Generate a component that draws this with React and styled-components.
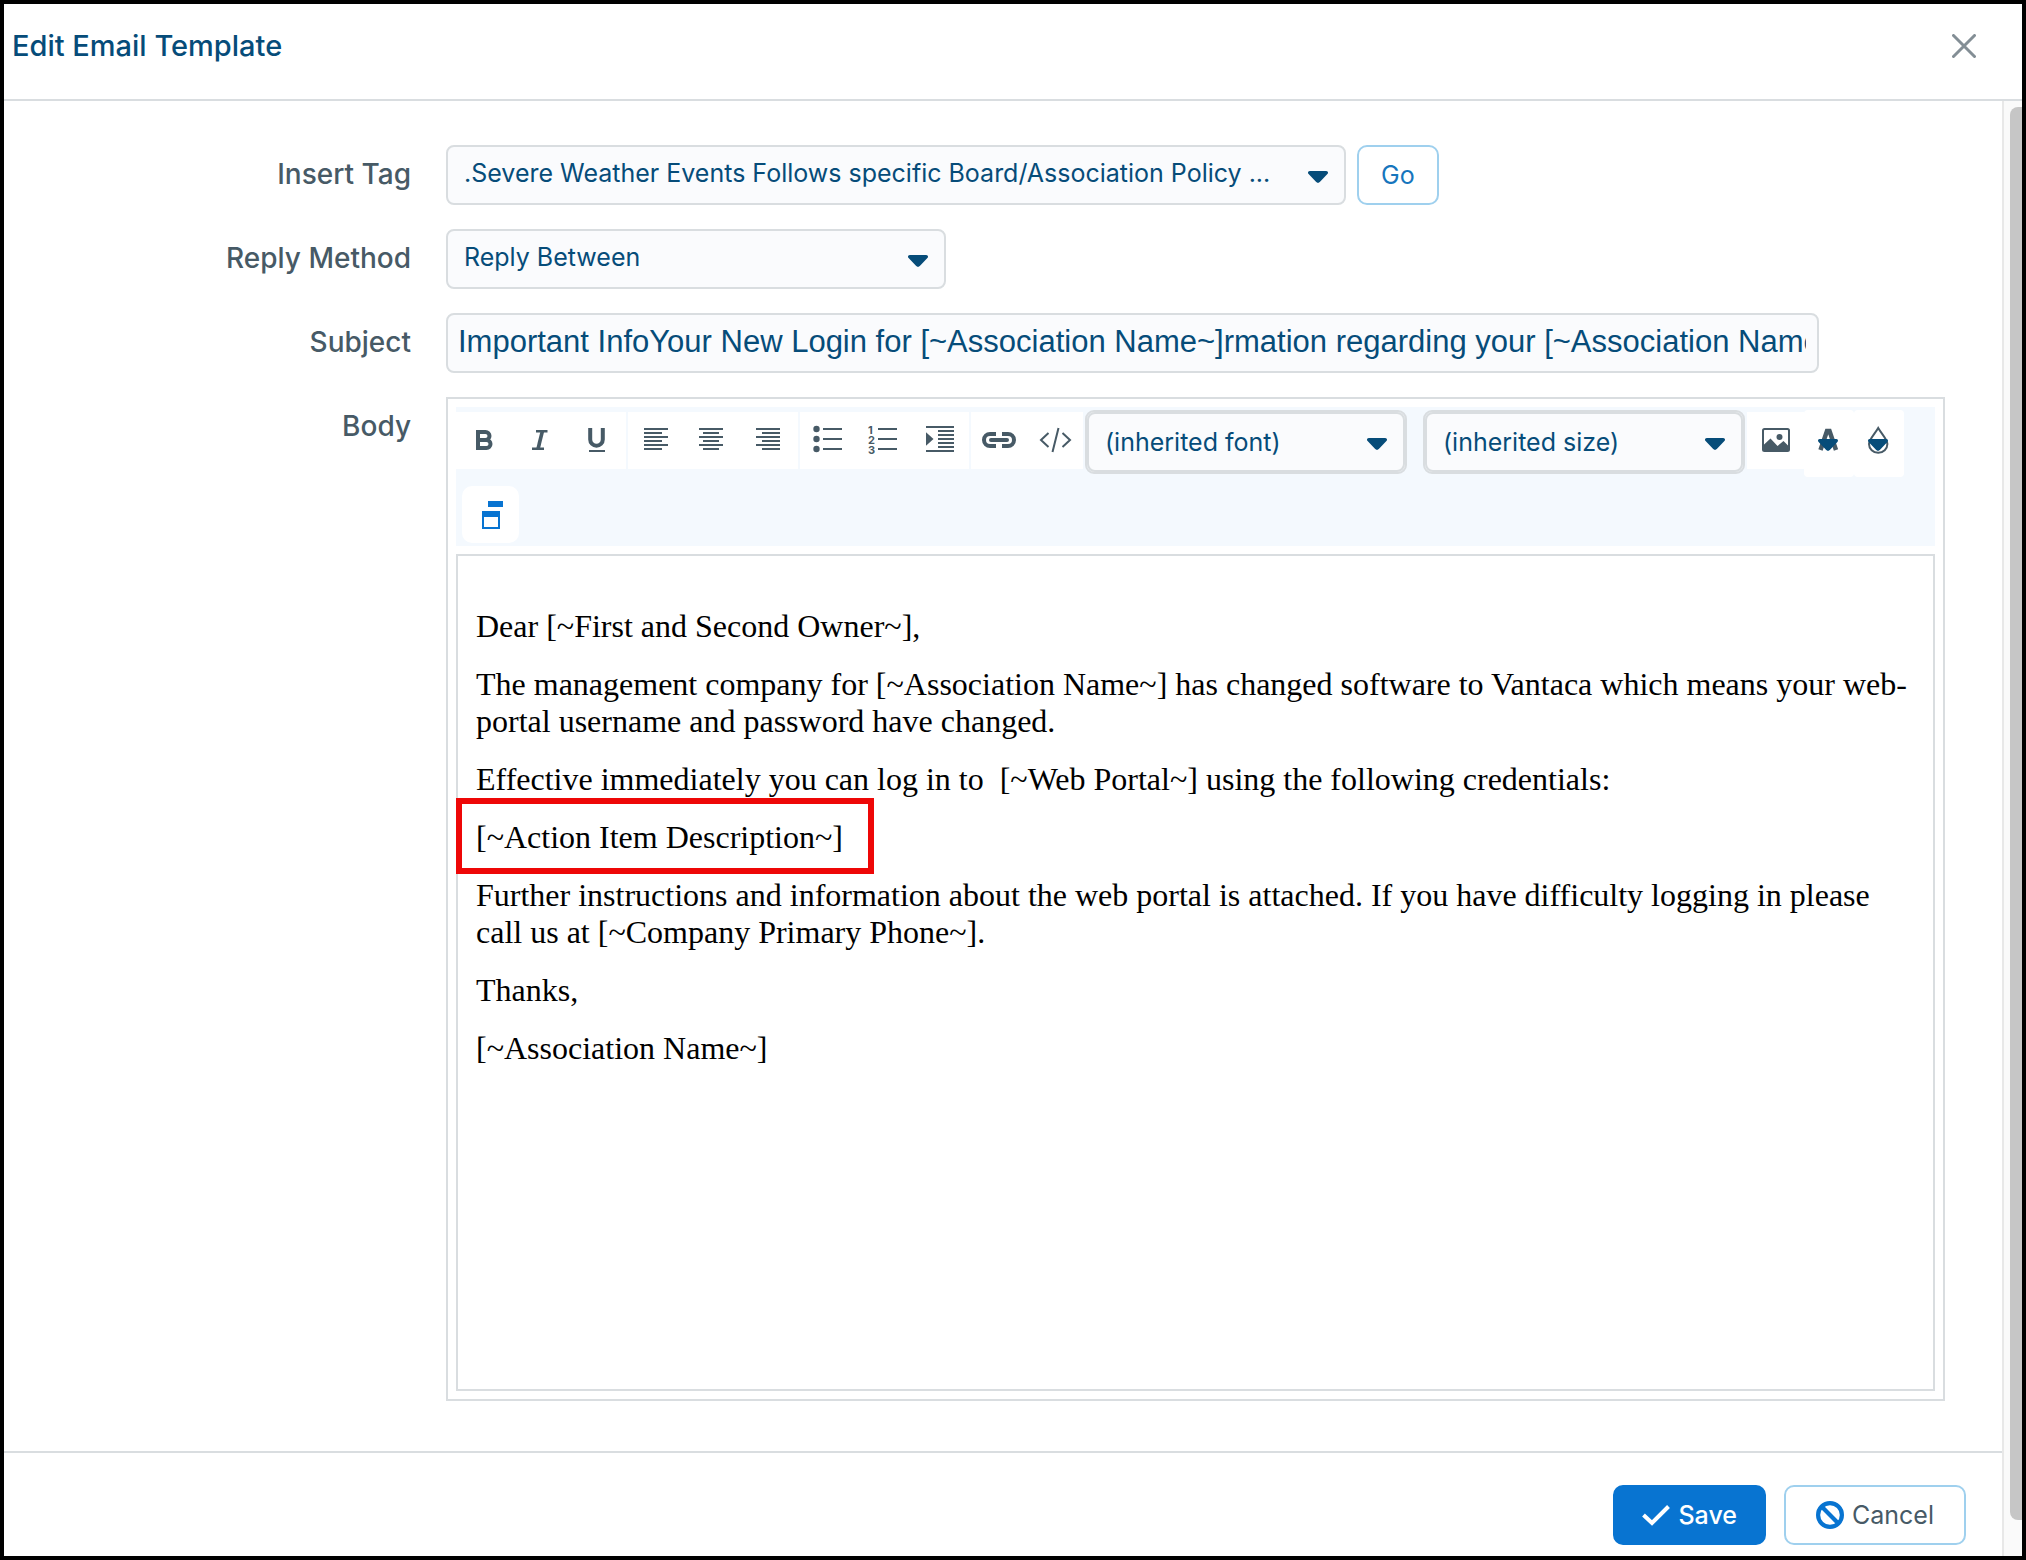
import React from "react";
import styled, { createGlobalStyle, css } from "styled-components";

const color = {
  navy: "#064c79",
  slate: "#475a66",
  blue: "#0874d1",
  link: "#1676bd",
  line: "#d9dde0",
  paleBlue: "#9fd0ee",
  field: "#fafbfd",
  toolbar: "#f4f9fe",
};

const Global = createGlobalStyle`
  * { box-sizing: border-box; }
  body { margin: 0; background: #fff; font-family: Inter, "Liberation Sans", sans-serif; }
  button, select, input { font-family: inherit; margin: 0; }
`;

const Dialog = styled.div`
  display: flex;
  flex-direction: column;
  min-height: 100vh;
  border: 4px solid #000;
  background: #fff;
`;

const Header = styled.header`
  display: flex;
  align-items: center;
  justify-content: space-between;
  height: 97px;
  padding: 0 46px 11px 8px;
  border-bottom: 2px solid ${color.line};
`;

const Title = styled.h1`
  margin: 0;
  font-size: 29px;
  line-height: 36px;
  font-weight: 500;
  color: ${color.navy};
`;

const CloseButton = styled.button`
  display: flex;
  padding: 0;
  border: 0;
  background: none;
`;

const Body = styled.div`
  display: flex;
  flex: 1;
`;

const Content = styled.form`
  flex: 1;
  min-width: 0;
  display: flex;
  flex-direction: column;
`;

const ScrollTrack = styled.div`
  display: flex;
  width: 20px;
  padding: 6px 0 36px 6px;
  border-left: 2px solid #e8e8e8;
  background: #fafafa;
`;

const ScrollThumb = styled.div`
  flex: 1;
  border-radius: 8px 0 0 8px;
  background: #c6c6c6;
`;

const Fields = styled.div`
  flex: 1;
  display: flex;
  flex-direction: column;
  gap: 24px;
  padding: 44px 57px 50px 0;
`;

const Row = styled.div`
  display: grid;
  grid-template-columns: minmax(0, 407px) minmax(0, 1fr);
  column-gap: 35px;
`;

const labelStyle = css`
  font-size: 28px;
  line-height: 58px;
  font-weight: 500;
  text-align: right;
  color: ${color.slate};
`;

const Label = styled.label`
  ${labelStyle}
`;

const LabelText = styled.span`
  ${labelStyle}
`;

const Controls = styled.div`
  display: flex;
  gap: 11px;
`;

const SelectBox = styled.div`
  display: grid;
  width: 100%;
  max-width: ${(p) => p.$width}px;
  ${(p) =>
    p.$framed &&
    css`
      width: ${p.$width}px;
      border: 2px solid ${color.line};
      border-radius: 9px;
      background: #eef1f3;
    `}
`;

const NativeSelect = styled.select`
  grid-area: 1 / 1;
  appearance: none;
  width: 100%;
  height: 60px;
  padding: ${(p) => (p.$framed ? "0 40px 0 16px" : "0 44px 4px 16px")};
  border: 2px solid ${color.line};
  border-radius: 8px;
  background: ${color.field};
  color: ${color.navy};
  font-size: 25px;
`;

const CaretSvg = styled.svg`
  grid-area: 1 / 1;
  align-self: center;
  justify-self: end;
  margin: 4px 18px 0 0;
  pointer-events: none;
`;

const SubjectInput = styled.input`
  width: 100%;
  max-width: 1373px;
  height: 60px;
  padding: 0 11px 2px 10px;
  border: 2px solid ${color.line};
  border-radius: 8px;
  background: ${color.field};
  color: ${color.navy};
  font-family: "Liberation Sans", Arial, sans-serif;
  font-size: 31px;
`;

const Button = styled.button`
  display: flex;
  align-items: center;
  gap: 8px;
  height: 60px;
  padding: 0 ${(p) => p.$pad}px;
  border: 2px solid ${(p) => (p.$primary ? color.blue : color.paleBlue)};
  border-radius: 10px;
  background: ${(p) => (p.$primary ? color.blue : "#fff")};
  color: ${(p) => (p.$primary ? "#fff" : p.$link ? color.link : color.slate)};
  font-size: 25px;
  line-height: 32px;
  font-weight: ${(p) => (p.$primary ? 500 : 400)};
`;

const Editor = styled.div`
  display: flex;
  flex-direction: column;
  gap: 8px;
  padding: 8px;
  border: 2px solid ${color.line};
`;

const Toolbar = styled.div`
  display: flex;
  flex-wrap: wrap;
  align-items: flex-start;
  gap: 9px 2px;
  padding: 3px 0;
  background: ${color.toolbar};
`;

const ToolGroup = styled.div`
  display: flex;
  margin-top: 2px;
  padding-right: ${(p) => p.$end || 0}px;
  background: #fff;
`;

const ToolSelects = styled.div`
  display: flex;
  gap: 16px;
`;

const ToolButton = styled.button`
  display: flex;
  align-items: center;
  justify-content: center;
  width: 56px;
  height: 57px;
  padding: 0;
  border: 0;
  background: #fff;
  color: ${color.slate};
`;

const InsertTools = styled.div`
  display: flex;
  align-items: flex-start;
`;

const ColorButton = styled(ToolButton)`
  width: 50px;
  height: 67px;
  border-radius: 4px;
`;

const TileButton = styled(ToolButton)`
  width: 57px;
  margin-left: 6px;
  border-radius: 10px;
  color: ${color.blue};
`;

const IconSvg = styled.svg`
  display: block;
  overflow: visible;
  fill: none;
  stroke: currentColor;
  stroke-width: 2;
`;

const Page = styled.div`
  min-height: 837px;
  padding: 52px 18px;
  border: 2px solid ${color.line};
  display: flex;
  flex-direction: column;
  gap: 21px;
  color: #000;
  font-family: "Liberation Serif", "Times New Roman", serif;
  font-size: 32px;
  line-height: 37px;
`;

const Paragraph = styled.p`
  margin: 0;
`;

const MarkedParagraph = styled(Paragraph)`
  position: relative;
  width: fit-content;
  &::after {
    content: "";
    position: absolute;
    inset: -21px -31px -18px -20px;
    border: 6px solid #ee0707;
  }
`;

const Footer = styled.footer`
  display: flex;
  justify-content: flex-end;
  gap: 18px;
  padding: 32px 36px 11px;
  border-top: 2px solid ${color.line};
`;

const caretPath =
  "M1.8 0h16.4c1.7 0 2.4 1.8 1.2 3l-7.6 8.1c-1 1.1-2.6 1.1-3.6 0L.6 3C-.6 1.8 .1 0 1.8 0z";

function Icon({ children, width = 32, height = 33 }) {
  return (
    <IconSvg width={width} height={height} viewBox={`0 0 ${width} ${height}`} aria-hidden="true">
      {children}
    </IconSvg>
  );
}

function Select({ options, width, framed, ...rest }) {
  return (
    <SelectBox $width={width} $framed={framed}>
      <NativeSelect $framed={framed} {...rest}>
        {options.map((o) => (
          <option key={o}>{o}</option>
        ))}
      </NativeSelect>
      <CaretSvg width="20" height="12" viewBox="0 0 20 12" aria-hidden="true">
        <path d={caretPath} fill={color.navy} />
      </CaretSvg>
    </SelectBox>
  );
}

const alignYs = [5, 9, 13, 17, 21, 25];
const lines = (long, short) =>
  alignYs.map((y, i) => {
    const [a, b] = i % 2 ? short : long;
    return `M${a} ${y}H${b}`;
  }).join("");

const toolGroups = [
  {
    end: 2,
    tools: [
      ["Bold", <path key="b" strokeWidth="4" d="M10 8h7.5a4 4 0 0 1 0 8H10M10 16h8.5a4 4 0 0 1 0 8H10zM10 6v20" />],
      [
        "Italic",
        <React.Fragment key="i">
          <path strokeWidth="2.4" d="M12 7.2h11.5M8 24.8h12" />
          <path strokeWidth="3.6" d="M18.4 7L14 25" />
        </React.Fragment>,
      ],
      [
        "Underline",
        <React.Fragment key="u">
          <path strokeWidth="4" d="M10.2 4v11.5a6.3 6.3 0 0 0 12.6 0V4" />
          <path d="M9 27h16" />
        </React.Fragment>,
      ],
    ],
  },
  {
    end: 2,
    tools: [
      ["Align left", <path key="l" d={lines([4, 28], [4, 22])} />],
      ["Align center", <path key="c" d={lines([3, 27], [7, 23])} />],
      ["Align right", <path key="r" d={lines([4, 28], [10, 28])} />],
    ],
  },
  {
    end: 1,
    tools: [
      [
        "Bulleted list",
        <React.Fragment key="ul">
          <path d="M11 5h19M11 15h19M11 25h19" />
          <g fill="currentColor" stroke="none">
            <circle cx="4.5" cy="5" r="3.2" />
            <circle cx="4.5" cy="15" r="3.2" />
            <circle cx="4.5" cy="25" r="3.2" />
          </g>
        </React.Fragment>,
      ],
      [
        "Numbered list",
        <React.Fragment key="ol">
          <path d="M10 5h19M10 15h19M10 25h19" />
          <g fill="currentColor" stroke="none" fontSize="11" fontWeight="700">
            <text x="0" y="10">1</text>
            <text x="0" y="20">2</text>
            <text x="0" y="30">3</text>
          </g>
        </React.Fragment>,
      ],
      [
        "Indent",
        <React.Fragment key="in">
          <path d="M2 3h28M14 7h16M14 11h16M14 15h16M14 19h16M14 23h16M2 27h28" />
          <path d="M2 8.3L9.5 15L2 21.7z" fill="currentColor" stroke="none" />
        </React.Fragment>,
      ],
    ],
  },
  {
    end: 0,
    tools: [
      [
        "Insert link",
        <React.Fragment key="a">
          <path strokeWidth="4" d="M13 10H7a6 6 0 0 0 0 12h6M19 10h6a6 6 0 0 1 0 12h-6" />
          <path strokeWidth="4" strokeLinecap="round" d="M8 16h16" />
        </React.Fragment>,
      ],
      ["View HTML", <path key="h" d="M9.5 9L2 16l7.5 7M23.500 9l7.500 7l-7.500 7M19.500 4l-6 24" />],
    ],
  },
];

export default function App() {
  return (
    <>
      <Global />
      <Dialog role="dialog" aria-labelledby="dialog-title">
        <Header>
          <Title id="dialog-title">Edit Email Template</Title>
          <CloseButton type="button" aria-label="Close">
            <svg width="24" height="24" viewBox="0 0 24 24" fill="none" stroke="#838e95" strokeWidth="3" strokeLinecap="round">
              <path d="M1.5 1.5l21 21M22.5 1.5l-21 21" />
            </svg>
          </CloseButton>
        </Header>
        <Body>
          <Content onSubmit={(e) => e.preventDefault()}>
            <Fields>
              <Row>
                <Label htmlFor="tag">Insert Tag</Label>
                <Controls>
                  <Select
                    id="tag"
                    width={900}
                    options={[".Severe Weather Events Follows specific Board/Association Policy ..."]}
                  />
                  <Button type="button" $link $pad={22}>Go</Button>
                </Controls>
              </Row>
              <Row>
                <Label htmlFor="reply">Reply Method</Label>
                <Select id="reply" width={500} options={["Reply Between"]} />
              </Row>
              <Row>
                <Label htmlFor="subject">Subject</Label>
                <SubjectInput
                  id="subject"
                  type="text"
                  defaultValue="Important InfoYour New Login for [~Association Name~]rmation regarding your [~Association Name~]"
                />
              </Row>
              <Row>
                <LabelText id="body-label">Body</LabelText>
                <Editor>
                  <Toolbar role="toolbar" aria-label="Formatting">
                    {toolGroups.map((group, i) => (
                      <ToolGroup key={i} $end={group.end}>
                        {group.tools.map(([name, art]) => (
                          <ToolButton type="button" key={name} aria-label={name}>
                            <Icon>{art}</Icon>
                          </ToolButton>
                        ))}
                      </ToolGroup>
                    ))}
                    <ToolSelects>
                      <Select framed width={322} aria-label="Font name" options={["(inherited font)"]} />
                      <Select framed width={322} aria-label="Font size" options={["(inherited size)"]} />
                    </ToolSelects>
                    <InsertTools>
                      <ToolGroup $end={1}>
                        <ToolButton type="button" aria-label="Insert image">
                          <Icon>
                            <rect x="4" y="5" width="26" height="22" rx="1.5" />
                            <g fill="currentColor" stroke="none">
                              <path d="M4 21.5L11.5 14.5L18.5 22L24.5 17L30 22.5V27H4z" />
                              <circle cx="20.5" cy="13" r="3" />
                            </g>
                          </Icon>
                        </ToolButton>
                      </ToolGroup>
                      <ColorButton type="button" aria-label="Text color">
                        <Icon>
                          <path strokeWidth="4.5" d="M7.5 23L14 4h2.500L23 23M9 17h12" />
                          <g transform="translate(5 12)">
                            <path d={caretPath} fill={color.navy} stroke="none" />
                          </g>
                        </Icon>
                      </ColorButton>
                      <ColorButton type="button" aria-label="Background color">
                        <Icon>
                          <path d="M15.2 1C12 6.5 6 12.5 6 17a9.2 8.8 0 0 0 18.4 0C24.4 12.5 18.4 6.5 15.2 1z" />
                          <g transform="translate(5 12)">
                            <path d={caretPath} fill={color.navy} stroke="none" />
                          </g>
                        </Icon>
                      </ColorButton>
                    </InsertTools>
                    <TileButton type="button" aria-label="Insert template">
                      <Icon width={33}>
                        <g fill="currentColor" stroke="none">
                          <path d="M14 3h15v6H14z" />
                          <path d="M8 13h18v18H8zM10 19v10h14V19z" fillRule="evenodd" />
                        </g>
                      </Icon>
                    </TileButton>
                  </Toolbar>
                  <Page
                    role="textbox"
                    aria-multiline="true"
                    aria-labelledby="body-label"
                    contentEditable
                    suppressContentEditableWarning
                    spellCheck={false}
                  >
                    <Paragraph>Dear [~First and Second Owner~],</Paragraph>
                    <Paragraph>
                      The management company for [~Association Name~] has changed software to Vantaca which means
                      your web-portal username and password have changed.
                    </Paragraph>
                    <Paragraph>
                      Effective immediately you can log in to&nbsp; [~Web Portal~] using the following credentials:
                    </Paragraph>
                    <MarkedParagraph>[~Action Item Description~]</MarkedParagraph>
                    <Paragraph>
                      Further instructions and information about the web portal is attached. If you have difficulty
                      logging in please call us at [~Company Primary Phone~].
                    </Paragraph>
                    <Paragraph>Thanks,</Paragraph>
                    <Paragraph>[~Association Name~]</Paragraph>
                  </Page>
                </Editor>
              </Row>
            </Fields>
            <Footer>
              <Button type="submit" $primary $pad={27}>
                <Icon width={28} height={28}>
                  <path strokeWidth="4" d="M1.5 14L10 22L26.5 5.5" />
                </Icon>
                Save
              </Button>
              <Button type="button" $pad={30}>
                <svg width="28" height="28" viewBox="0 0 28 28" fill="none" stroke={color.blue} strokeWidth="4.2" aria-hidden="true">
                  <circle cx="14" cy="14" r="11.9" />
                  <path d="M5.6 5.6l16.8 16.8" />
                </svg>
                Cancel
              </Button>
            </Footer>
          </Content>
          <ScrollTrack aria-hidden="true">
            <ScrollThumb />
          </ScrollTrack>
        </Body>
      </Dialog>
    </>
  );
}
